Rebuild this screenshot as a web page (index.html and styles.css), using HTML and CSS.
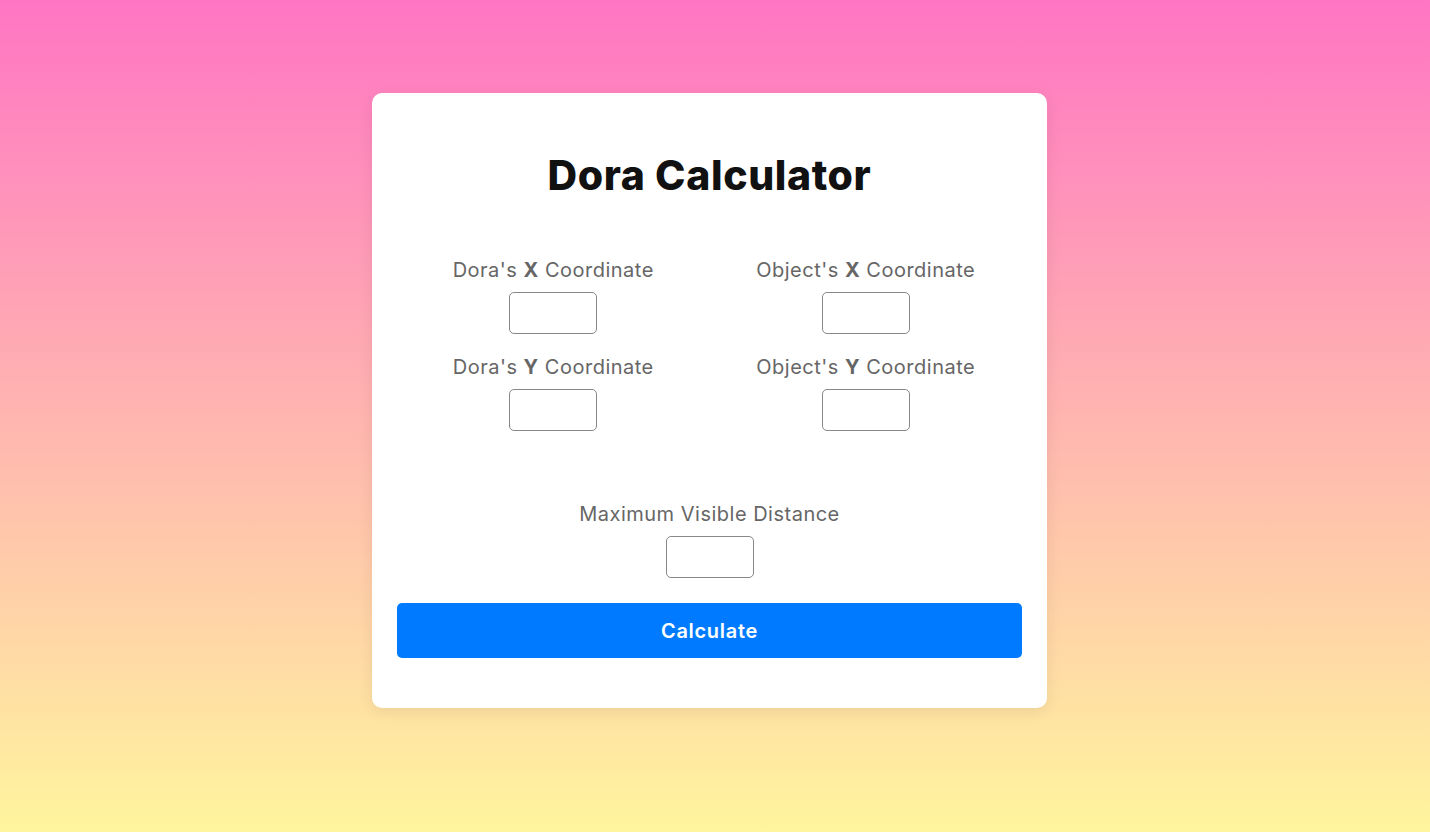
FILE: index.html
```html
<!DOCTYPE html>
<html lang="en">
<head>
<meta charset="utf-8">
<title>Dora Calculator</title>
<link rel="stylesheet" href="styles.css">
</head>
<body>
<main class="page">
  <section class="card">
    <h1 class="title">Dora Calculator</h1>
    <div class="grid">
      <div class="field">
        <label class="label">Dora's <b>X</b> Coordinate</label>
        <input class="box" type="text">
      </div>
      <div class="field">
        <label class="label">Object's <b>X</b> Coordinate</label>
        <input class="box" type="text">
      </div>
      <div class="field">
        <label class="label">Dora's <b>Y</b> Coordinate</label>
        <input class="box" type="text">
      </div>
      <div class="field">
        <label class="label">Object's <b>Y</b> Coordinate</label>
        <input class="box" type="text">
      </div>
    </div>
    <div class="field single">
      <label class="label">Maximum Visible Distance</label>
      <input class="box" type="text">
    </div>
    <button class="btn" type="button">Calculate</button>
  </section>
</main>
</body>
</html>
```

FILE: styles.css
```css
html, body {
  margin: 0;
  padding: 0;
}
body {
  min-height: 832px;
  background: linear-gradient(to bottom, #ff75c3 0%, #fff59d 100%);
  font-family: "Inter", "Open Sans", "Liberation Sans", sans-serif;
}
.page {
  display: flex;
  justify-content: center;
  align-items: flex-start;
  padding: 93px 11px 0 0;
}
.card {
  width: 625px;
  background: #fff;
  border-radius: 10px;
  padding: 25px 25px 50px;
  box-shadow: 0 4px 16px rgba(0, 0, 0, 0.08);
  display: flex;
  flex-direction: column;
}
.title {
  margin: 27px 0 0;
  height: 60px;
  line-height: 60px;
  text-align: center;
  font-size: 41px;
  font-weight: 800;
  color: #111;
  letter-spacing: 0.6px;
}
.grid {
  margin-top: 51px;
  display: grid;
  grid-template-columns: 1fr 1fr;
  row-gap: 19px;
}
.field {
  display: flex;
  flex-direction: column;
  align-items: center;
  gap: 8px;
}
.single {
  margin-top: 69px;
}
.label {
  height: 28px;
  line-height: 28px;
  font-size: 20px;
  letter-spacing: 0.5px;
  color: #666;
}
.label b {
  font-weight: 700;
}
.box {
  box-sizing: border-box;
  width: 88px;
  height: 42px;
  border: 1px solid #888;
  border-radius: 5px;
  background: #fff;
  margin: 0;
  padding: 0 6px;
  font: inherit;
}
.btn {
  margin-top: 25px;
  height: 55px;
  border: none;
  border-radius: 5px;
  background: #007bff;
  color: #fff;
  font-family: inherit;
  font-size: 20px;
  letter-spacing: 0.7px;
  font-weight: 600;
  cursor: pointer;
}
```
